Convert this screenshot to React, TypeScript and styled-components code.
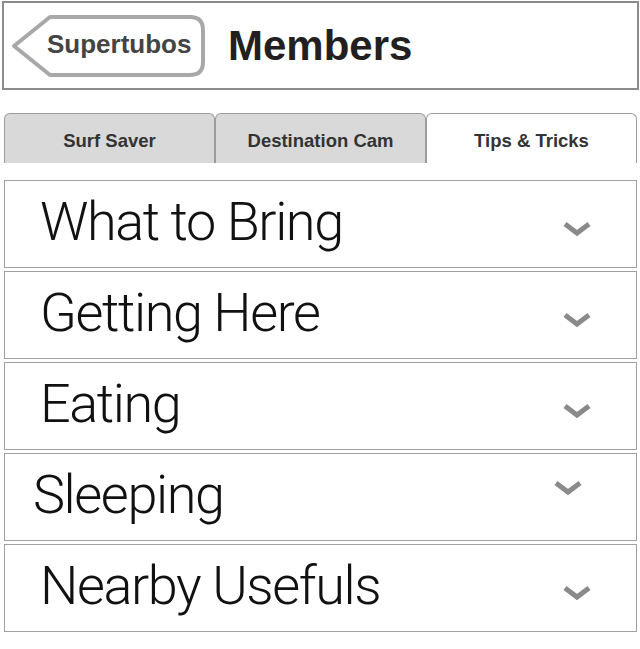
import React from 'react';
import styled, { createGlobalStyle } from 'styled-components';

const GlobalStyle = createGlobalStyle`
    html, body {
        margin: 0;
        padding: 0;
        background: #ffffff;
    }
    * {
        box-sizing: border-box;
    }
`;

type Section = {
    title: string;
    // a few rows of the mock are drawn slightly off the grid
    textShift?: number;
    chevronX?: number;
    chevronY?: number;
};

const SECTIONS: Section[] = [
    { title: 'What to Bring' },
    { title: 'Getting Here' },
    { title: 'Eating' },
    { title: 'Sleeping', textShift: -7, chevronX: -9, chevronY: -14 },
    { title: 'Nearby Usefuls' },
];

const TABS = ['Surf Saver', 'Destination Cam', 'Tips & Tricks'];

const BackOutline: React.FC = () => (
    <OutlineSvg viewBox="0 0 196 64" preserveAspectRatio="none">
        <path
            d="M40 3 L180 3 Q193 3 193 16 L193 48 Q193 61 180 61 L40 61 L4 32 Z"
            fill="none"
            stroke="#a8a8a8"
            strokeWidth={4}
            strokeLinejoin="round"
        />
    </OutlineSvg>
);

const Chevron: React.FC = () => (
    <svg width="30" height="16" viewBox="0 0 30 16">
        <polyline
            points="3,3 15,12 27,3"
            fill="none"
            stroke="#8a8a8a"
            strokeWidth={5}
            strokeLinejoin="miter"
        />
    </svg>
);

const App: React.FC = () => {
    const activeTab = 2;

    return (
        <Page>
            <GlobalStyle />
            <TopBar>
                <BackButton>
                    <BackOutline />
                    <BackLabel>Supertubos</BackLabel>
                </BackButton>
                <Title>Members</Title>
            </TopBar>
            <TabStrip>
                {TABS.map((tab, index) => (
                    <Tab key={tab} active={index === activeTab}>
                        {tab}
                    </Tab>
                ))}
            </TabStrip>
            <SectionList>
                {SECTIONS.map((section) => (
                    <SectionRow key={section.title}>
                        <SectionTitle shift={section.textShift || 0}>{section.title}</SectionTitle>
                        <ChevronWrap dx={section.chevronX || 0} dy={section.chevronY || 0}>
                            <Chevron />
                        </ChevronWrap>
                    </SectionRow>
                ))}
            </SectionList>
        </Page>
    );
};

const Page = styled.div`
    width: 640px;
    min-height: 649px;
    padding: 1px 1px 0 2px;
    font-family: 'Liberation Sans', Arial, sans-serif;
`;

const TopBar = styled.div`
    display: flex;
    align-items: center;
    gap: 22px;
    height: 89px;
    border: 2px solid #8c8c8c;
    padding-left: 6px;
`;

const BackButton = styled.div`
    position: relative;
    display: flex;
    align-items: center;
    width: 196px;
    height: 64px;
    padding-left: 37px;
`;

const OutlineSvg = styled.svg`
    position: absolute;
    inset: 0;
    width: 100%;
    height: 100%;
`;

const BackLabel = styled.span`
    position: relative;
    font-size: 26px;
    font-weight: 700;
    color: #444444;
    line-height: 1;
    margin-top: -4px;
`;

const Title = styled.h1`
    margin: 0;
    font-size: 42px;
    font-weight: 700;
    color: #231f20;
    line-height: 1;
`;

const TabStrip = styled.div`
    display: flex;
    margin-top: 23px;
    padding: 0 2px 0 2px;
`;

const Tab = styled.div<{ active: boolean }>`
    flex: 1;
    height: 50px;
    display: flex;
    align-items: center;
    justify-content: center;
    padding-top: 5px;
    font-size: 18.5px;
    font-weight: 700;
    color: #333333;
    background: ${(props) => (props.active ? '#ffffff' : '#d9d9d9')};
    border: 1px solid #9c9c9c;
    border-bottom: none;
    border-radius: 6px 6px 0 0;
`;

const SectionList = styled.div`
    display: flex;
    flex-direction: column;
    gap: 3px;
    margin-top: 17px;
    padding: 0 2px 0 2px;
`;

const SectionRow = styled.div`
    display: flex;
    align-items: center;
    justify-content: space-between;
    height: 88px;
    padding: 0 44px 0 35px;
    border: 1px solid #a0a0a0;
`;

const SectionTitle = styled.span<{ shift: number }>`
    font-family: Roboto, 'Liberation Sans', sans-serif;
    font-weight: 300;
    font-size: 54px;
    letter-spacing: -1.4px;
    color: #111111;
    line-height: 1;
    margin-left: ${(props) => props.shift}px;
    margin-top: -4px;
`;

const ChevronWrap = styled.div<{ dx: number; dy: number }>`
    display: flex;
    margin-top: ${(props) => 9 + props.dy * 2}px;
    margin-right: ${(props) => -props.dx}px;
`;

export default App;
